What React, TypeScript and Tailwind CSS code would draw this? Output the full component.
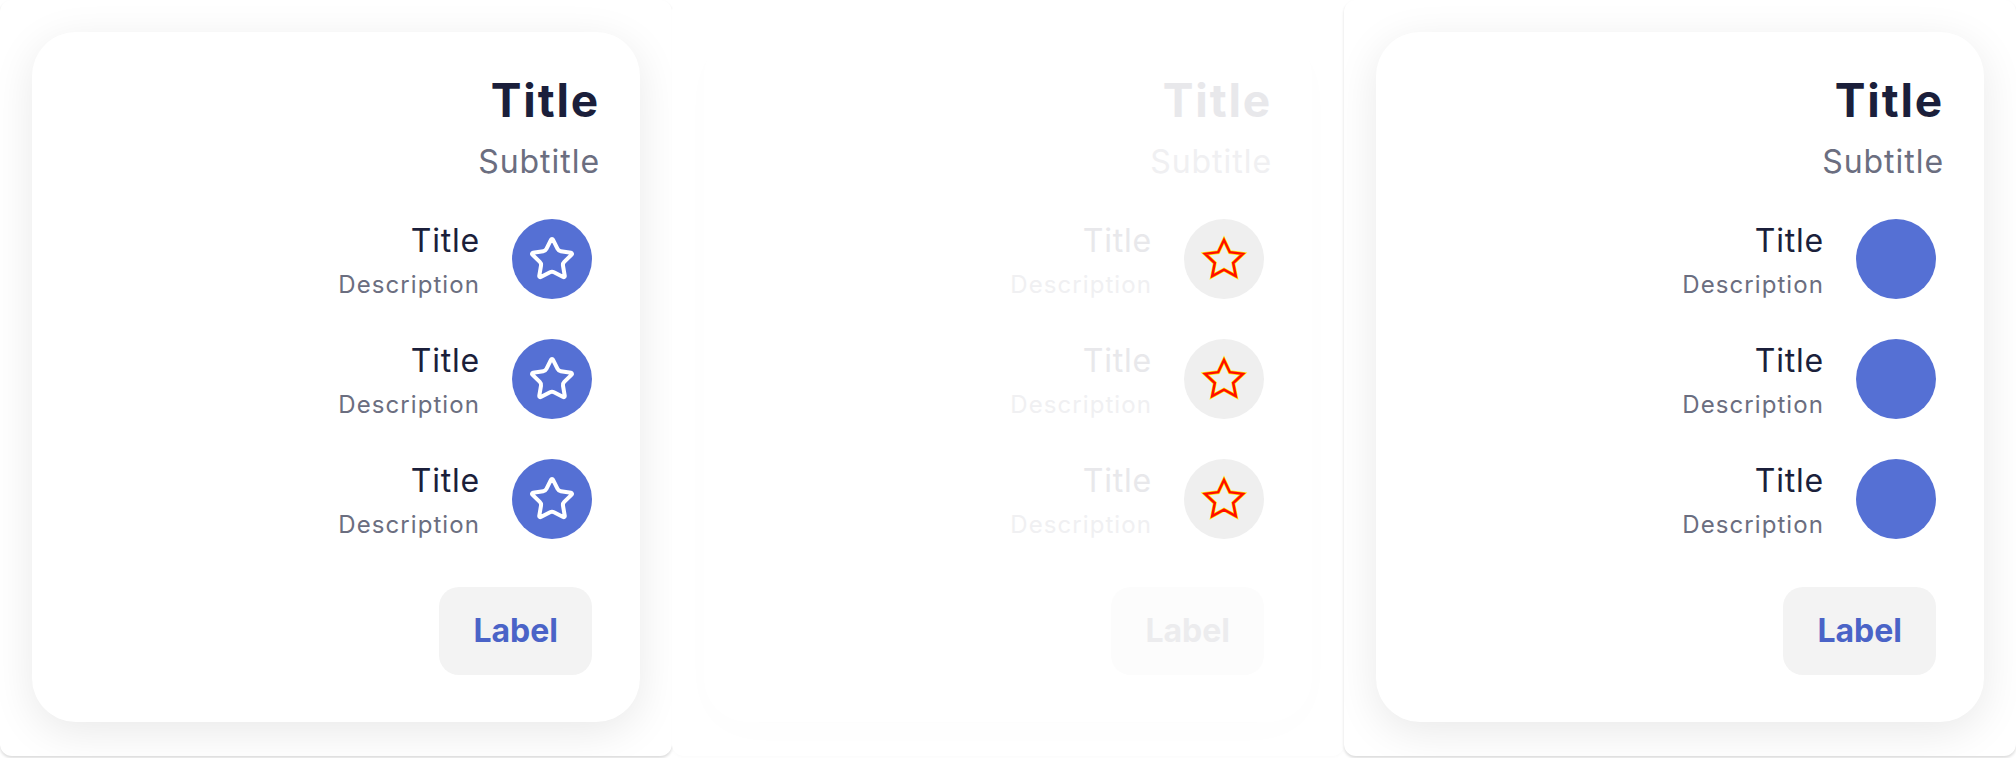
import { Star } from 'lucide-react';

type Variant = 'star' | 'ghost' | 'plain';

const rows = [0, 1, 2];

const starPath = 'M12 2.5l2.9 6.1 6.6.8-4.9 4.6 1.3 6.6L12 17.3l-5.9 3.3 1.3-6.6-4.9-4.6 6.6-.8z';

function GhostStar() {
  return (
    <svg width="48" height="48" viewBox="0 0 24 24" fill="none" strokeLinejoin="miter">
      <path d={starPath} stroke="#ffe600" strokeWidth="1.9" />
      <path d={starPath} stroke="#ff0d00" strokeWidth="1.25" />
    </svg>
  );
}

function Card({ variant }: { variant: Variant }) {
  const ghost = variant === 'ghost';
  return (
    <div
      className={`flex flex-col items-end rounded-[44px] bg-white pt-[45px] pr-10 pb-[47px] ${
        ghost ? 'shadow-[0_10px_40px_rgba(0,0,0,0.012)]' : 'shadow-[0_10px_44px_rgba(0,0,0,0.09)]'
      }`}
    >
      <h2
        className={`text-[46px] font-bold leading-none tracking-[0.04em] ${
          ghost ? 'text-[#e8e8eb]' : 'text-[#1b1f3b]'
        }`}
      >
        Title
      </h2>
      <p
        className={`mt-[23px] text-[32px] leading-none tracking-[0.03em] ${
          ghost ? 'text-[#f0f0f2]' : 'text-[#6b6e80]'
        }`}
      >
        Subtitle
      </p>

      <div className="mt-[41px] mr-2 flex flex-col gap-10">
        {rows.map((i) => (
          <div key={i} className="flex items-start gap-8">
            <div className="flex flex-col items-end pt-[6px]">
              <span
                className={`text-[32px] leading-none tracking-[0.025em] ${
                  ghost ? 'text-[#e8e8eb]' : 'text-[#1b1f3b]'
                }`}
              >
                Title
              </span>
              <span
                className={`mt-4 text-[24px] leading-none tracking-[0.045em] ${
                  ghost ? 'text-[#f0f0f2]' : 'text-[#6b6e80]'
                }`}
              >
                Description
              </span>
            </div>
            <div
              className={`flex h-20 w-20 items-center justify-center rounded-full ${
                ghost ? 'bg-[#efefef]' : 'bg-[#5570d4]'
              }`}
            >
              {variant === 'star' && <Star size={48} strokeWidth={2} className="text-white" />}
              {ghost && <GhostStar />}
            </div>
          </div>
        ))}
      </div>

      <button
        className={`mt-12 mr-2 rounded-[20px] px-[34px] py-7 text-[32px] font-bold leading-none ${
          ghost ? 'bg-[#fcfcfc] text-[#ececee]' : 'bg-[#f3f3f3] text-[#4a63c7]'
        }`}
      >
        Label
      </button>
    </div>
  );
}

export default function App() {
  const frames: Variant[] = ['star', 'ghost', 'plain'];
  return (
    <div className="flex h-[758px] w-[2016px] bg-white font-['Inter','Noto_Sans',sans-serif]">
      {frames.map((v) => (
        <div
          key={v}
          className={`h-[756px] w-[672px] shrink-0 overflow-hidden rounded-xl bg-white p-8 ${
            v === 'ghost' ? 'shadow-[0_2px_3px_rgba(0,0,0,0.015)]' : 'shadow-[0_2px_3px_rgba(0,0,0,0.14)]'
          }`}
        >
          <Card variant={v} />
        </div>
      ))}
    </div>
  );
}
